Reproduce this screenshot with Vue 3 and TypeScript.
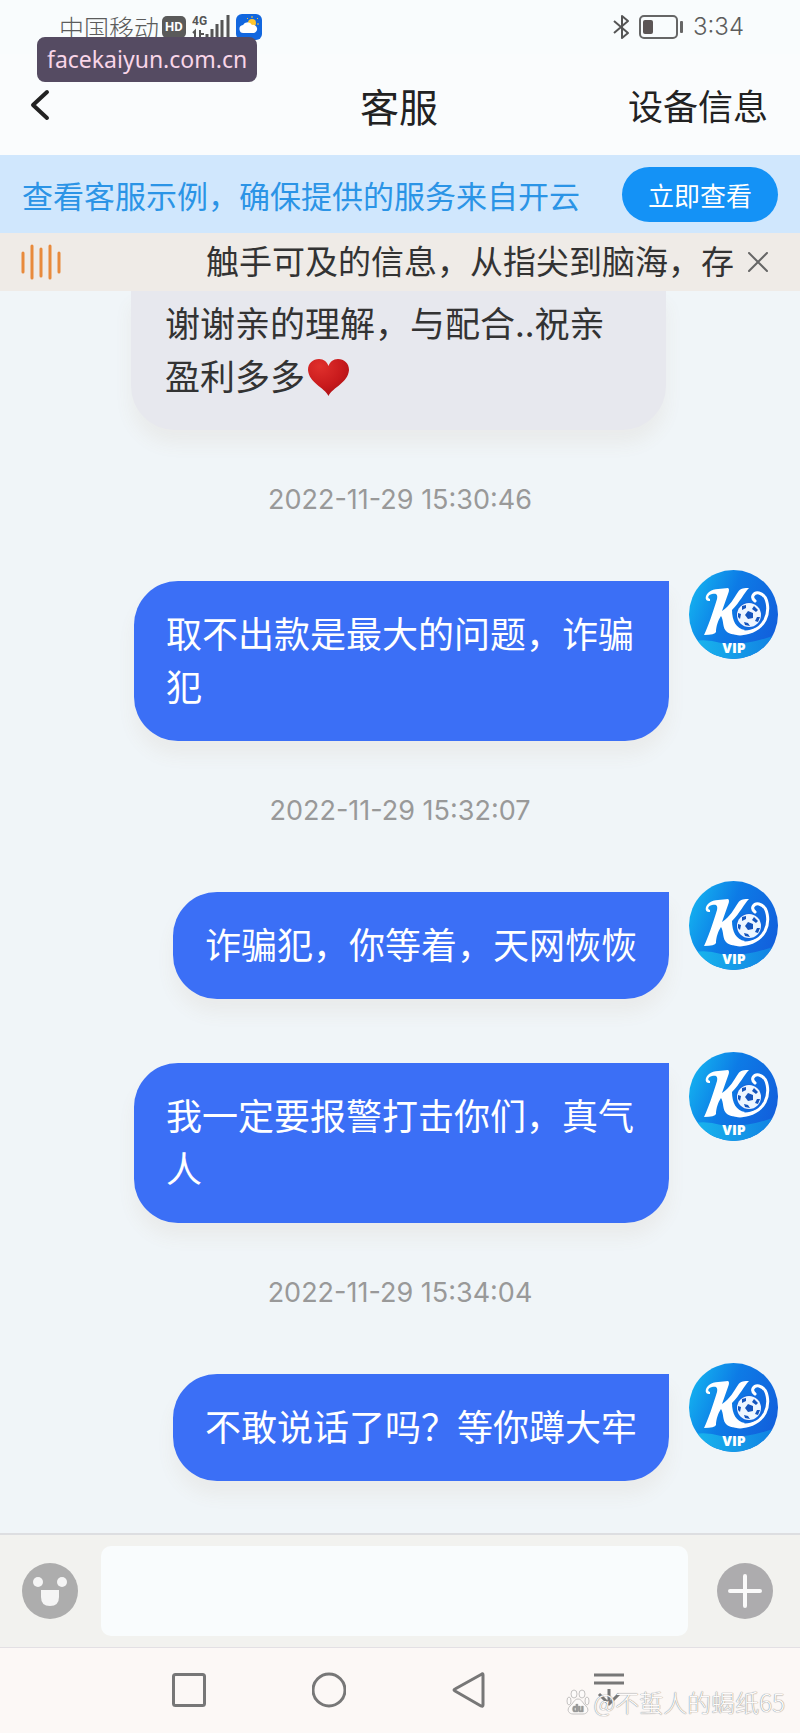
<script setup lang="ts">
import { ref } from 'vue'

interface Entry {
  id: number
  kind: 'in' | 'out' | 'time'
  text: string
  heart?: boolean
}

const entries: Entry[] = [
  { id: 1, kind: 'in', text: '谢谢亲的理解，与配合..祝亲盈利多多', heart: true },
  { id: 2, kind: 'time', text: '2022-11-29 15:30:46' },
  { id: 3, kind: 'out', text: '取不出款是最大的问题，诈骗犯' },
  { id: 4, kind: 'time', text: '2022-11-29 15:32:07' },
  { id: 5, kind: 'out', text: '诈骗犯，你等着，天网恢恢' },
  { id: 6, kind: 'out', text: '我一定要报警打击你们，真气人' },
  { id: 7, kind: 'time', text: '2022-11-29 15:34:04' },
  { id: 8, kind: 'out', text: '不敢说话了吗？等你蹲大牢' },
]

const draft = ref('')
</script>

<template>
  <div class="app">
    <div class="status">
      <div class="status-group">
        <span>中国移动</span>
        <span class="hd">HD</span>
        <svg class="signal" width="38" height="26" viewBox="0 0 38 26" aria-hidden="true">
          <text x="0" y="11" font-size="12" font-weight="700" fill="#555" font-family="Roboto, sans-serif">4G</text>
          <g stroke="#555" stroke-width="2" fill="none">
            <path d="M3 25V17L1 19M8 16V25M8 20H12" />
          </g>
          <g stroke="#555" stroke-width="3">
            <path d="M15 25V20M20 25V15M25 25V10M30 25V6M36 25V1" />
          </g>
        </svg>
        <svg width="26" height="26" viewBox="0 0 26 26" aria-hidden="true">
          <rect width="26" height="26" rx="6" fill="#1267df" />
          <circle cx="16" cy="9" r="4" fill="#ffc62e" />
          <path d="M16 2v2M22 4l-1 1M23 10h-2M11 4l1 1" stroke="#ffc62e" stroke-width="1" />
          <path d="M8 19a4 4 0 0 1-1-8 5 5 0 0 1 9 0 4 4 0 0 1 2 8z" fill="#fff" />
        </svg>
      </div>
      <div class="status-group">
        <svg width="18" height="26" viewBox="0 0 18 26" fill="none" stroke="#555" stroke-width="2" stroke-linejoin="round" aria-hidden="true">
          <path d="M1 7L15 19L9 24V2L15 7L1 19" />
        </svg>
        <svg class="battery" width="45" height="24" viewBox="0 0 45 24" aria-hidden="true">
          <rect x="1" y="1" width="37" height="22" rx="4" fill="none" stroke="#666" stroke-width="2" />
          <rect x="4" y="5" width="10" height="14" rx="2" fill="#5c5555" />
          <rect x="41" y="6" width="3" height="12" rx="1" fill="#666" />
        </svg>
        <span class="clock">3:34</span>
      </div>
    </div>
    <div class="site-tag">facekaiyun.com.cn</div>

    <header class="header">
      <button class="plain back" type="button" aria-label="返回">
        <svg width="20" height="32" viewBox="0 0 20 32" fill="none" stroke="#222" stroke-width="4" stroke-linecap="round" stroke-linejoin="round">
          <path d="M17 3L3 16L17 29" />
        </svg>
      </button>
      <h1>客服</h1>
      <button class="plain device" type="button">设备信息</button>
    </header>

    <section class="banner">
      <span>查看客服示例，确保提供的服务来自开云</span>
      <button class="plain view" type="button">立即查看</button>
    </section>

    <section class="notice">
      <svg width="40" height="36" viewBox="0 0 40 36" stroke="#e88a3c" stroke-width="3" stroke-linecap="round" aria-hidden="true">
        <path d="M2 9V28M11 2V34M20 5V32M29 2V34M38 9V28" />
      </svg>
      <span class="ticker">触手可及的信息，从指尖到脑海，存</span>
      <button class="plain close" type="button" aria-label="关闭">
        <svg width="20" height="20" viewBox="0 0 20 20" stroke="#666" stroke-width="2" stroke-linecap="round">
          <path d="M1 1L19 19M19 1L1 19" />
        </svg>
      </button>
    </section>

    <main class="chat">
      <template v-for="entry in entries" :key="entry.id">
        <time v-if="entry.kind === 'time'" class="time">{{ entry.text }}</time>
        <div v-else-if="entry.kind === 'in'" class="bubble incoming">
          {{ entry.text }}<svg v-if="entry.heart" class="heart" width="41" height="37" viewBox="0 0 41 37" role="img" aria-label="红心">
            <defs>
              <radialGradient id="heartFill" cx="0.3" cy="0.2" r="0.9">
                <stop offset="0" stop-color="#e0302c" />
                <stop offset="0.6" stop-color="#c81a1c" />
                <stop offset="1" stop-color="#a80f14" />
              </radialGradient>
            </defs>
            <path d="M20.500 37C16 28 1 24 0 11C0 4 5 0 11 0C16 0 19 3 20.500 7C22 3 25 0 30 0C36 0 41 4 41 11C40 24 25 28 20.500 37Z" fill="url(#heartFill)" />
          </svg>
        </div>
        <div v-else class="row">
          <p class="bubble outgoing">{{ entry.text }}</p>
          <svg class="avatar" width="89" height="89" viewBox="0 0 89 89" aria-hidden="true">
            <defs>
              <linearGradient :id="'bg' + entry.id" x1="0" y1="0.2" x2="1" y2="0.6">
                <stop offset="0" stop-color="#14b4f0" />
                <stop offset="0.45" stop-color="#0d7be6" />
                <stop offset="1" stop-color="#1260dc" />
              </linearGradient>
              <linearGradient :id="'wave' + entry.id" x1="0" y1="0" x2="1" y2="0">
                <stop offset="0" stop-color="#19b9ee" />
                <stop offset="1" stop-color="#117fe2" />
              </linearGradient>
              <clipPath :id="'clip' + entry.id"><circle cx="44.500" cy="44.500" r="44.500" /></clipPath>
            </defs>
            <g :clip-path="'url(#clip' + entry.id + ')'">
              <rect width="89" height="89" :fill="'url(#bg' + entry.id + ')'" />
              <path d="M0 72Q16 68 32 73Q56 77 89 64V89H0Z" :fill="'url(#wave' + entry.id + ')'" />
            </g>
            <path d="M21 31C16 32 15 26 20 22C25 18 33 19 39 18Q41 19 39 24L33 41C41 36 45 28 49 22C51 18 56 18 60 18C55 23 51 32 43 40C43 50 47 59 56 60C52 65 43 66 38 62C33 58 35 50 32 46C29 50 27 57 27 62Q26 65 15 65C19 57 24 42 28 29C29 24 27 23 23 24C19 25 18 28 21 29Z" fill="#fff" />
            <path d="M66 31C61 27 65 22 70 23C79 25 81 40 76 50C70 61 58 65 46 62" fill="none" stroke="#fff" stroke-width="3" stroke-linecap="round" />
            <path d="M43 52C47 63 60 62 68 57C61 65 50 68 43 63Z" fill="#fff" />
            <circle cx="60" cy="45" r="13" fill="#1567dc" />
            <circle cx="60" cy="45" r="12" fill="#eef6ff" />
            <g fill="#1555bd">
              <path d="M59 41l5 2 0 5-5 1-3-4z" />
              <path d="M53 36l4-1 0 3-4 2zM65 36l4 4-2 2-4-3zM68 47l3 0-2 5-3-1zM55 52l4 1 2 3-5-1zM49 43l3 1-1 5-2-2z" />
            </g>
            <text x="45" y="83" text-anchor="middle" font-size="14" font-weight="900" fill="#fff" font-family="'Open Sans', sans-serif">VIP</text>
          </svg>
        </div>
      </template>
    </main>

    <form class="composer" @submit.prevent>
      <button class="plain round" type="button" aria-label="表情">
        <svg width="56" height="56" viewBox="0 0 56 56">
          <circle cx="28" cy="28" r="28" fill="#adadad" />
          <circle cx="16" cy="19" r="5" fill="#f5f5f5" />
          <circle cx="40" cy="19" r="5" fill="#f5f5f5" />
          <path d="M19 27H37V34Q37 43 28 43Q19 43 19 34Z" fill="#f5f5f5" />
        </svg>
      </button>
      <input v-model="draft" class="field" type="text" aria-label="消息" />
      <button class="plain round" type="button" aria-label="更多">
        <svg width="56" height="56" viewBox="0 0 56 56">
          <circle cx="28" cy="28" r="28" fill="#adacae" />
          <path d="M28 13V43M13 28H43" stroke="#fafafa" stroke-width="4" stroke-linecap="round" />
        </svg>
      </button>
    </form>

    <nav class="system">
      <button class="plain" type="button" aria-label="最近任务">
        <svg width="34" height="36" viewBox="0 0 34 36"><rect x="1.500" y="2.500" width="31" height="31" rx="2" /></svg>
      </button>
      <button class="plain" type="button" aria-label="主页">
        <svg width="34" height="36" viewBox="0 0 34 36"><circle cx="17" cy="18" r="16" /></svg>
      </button>
      <button class="plain" type="button" aria-label="后退">
        <svg width="34" height="36" viewBox="0 0 34 36"><path d="M30 2Q31 1 31 3V33Q31 35 29 34L3 19Q1 18 3 17Z" /></svg>
      </button>
      <button class="plain" type="button" aria-label="收起">
        <svg width="34" height="36" viewBox="0 0 34 36"><path d="M2 3H32M2 11H32M17 17V32M7 22L17 32L27 22" /></svg>
      </button>
      <div class="watermark">
        <svg width="24" height="26" viewBox="0 0 24 26" aria-hidden="true">
          <g fill="#fdfbfa" stroke="#c4c2c1" stroke-width="1">
            <ellipse cx="8" cy="5" rx="3" ry="4" />
            <ellipse cx="16" cy="5" rx="3" ry="4" />
            <ellipse cx="3" cy="12" rx="2" ry="4" />
            <ellipse cx="21" cy="12" rx="2" ry="4" />
            <path d="M12 10C16 10 17 15 20 17C24 21 21 25 17 25H7C3 25 0 21 4 17C7 15 8 10 12 10Z" />
          </g>
          <text x="12" y="23" text-anchor="middle" font-size="10" font-weight="700" fill="#999" font-family="Roboto, sans-serif">du</text>
        </svg>
        <span>@不蜇人的蝎纸65</span>
      </div>
    </nav>
  </div>
</template>

<style>
body {
  margin: 0;
  background: #fcf8f6;
}
</style>

<style scoped>
.app {
  position: relative;
  display: flex;
  flex-direction: column;
  min-height: 100vh;
  background: #f0f5f8;
  color: #333;
  font-family: "Noto Sans CJK SC", sans-serif;
}
.plain {
  padding: 0;
  border: 0;
  background: none;
  color: inherit;
  font: inherit;
}
svg {
  display: block;
  flex: none;
}
.status {
  display: flex;
  justify-content: space-between;
  align-items: center;
  height: 54px;
  padding: 0 56px 0 59px;
  background: #f9fcfd;
  color: #5c5c5c;
  font-size: 25px;
  font-weight: 300;
}
.status-group {
  display: flex;
  align-items: center;
}
.hd {
  margin: 0 6px 0 3px;
  padding: 0 3px;
  border-radius: 5px;
  background: #5a5a5a;
  color: #fff;
  font: 700 13px/22px Roboto, sans-serif;
}
.signal {
  margin-right: 6px;
}
.battery {
  margin: 0 9px 0 8px;
}
.clock {
  font: 300 24px/32px Inter, sans-serif;
}
.site-tag {
  position: absolute;
  top: 37px;
  left: 37px;
  padding: 0 10px;
  border-radius: 8px;
  background: #554b62;
  color: #f9d5e8;
  font: 23px/45px "Noto Sans", sans-serif;
}
.header {
  display: grid;
  grid-template-columns: 1fr auto 1fr;
  align-items: center;
  height: 101px;
  padding: 0 32px 0 30px;
  background: #fafcfd;
  color: #222;
}
.back {
  justify-self: start;
}
h1 {
  margin: 0;
  font-size: 39px;
  font-weight: 400;
}
.device {
  justify-self: end;
  font-size: 35px;
}
.banner {
  display: flex;
  align-items: center;
  justify-content: space-between;
  height: 78px;
  padding: 0 22px;
  background: #d0e7fd;
  color: #2b94e6;
  font-size: 31px;
}
.view {
  padding: 0 26px;
  border-radius: 28px;
  background: #1492f6;
  color: #fff;
  font-size: 26px;
  line-height: 55px;
}
.notice {
  display: flex;
  align-items: center;
  height: 58px;
  padding: 0 32px 0 21px;
  background: #efebe7;
  font-size: 33px;
}
.ticker {
  flex: 1;
  padding: 0 14px 4px 0;
  line-height: 48px;
  text-align: right;
  white-space: nowrap;
}
.chat {
  display: flex;
  flex-direction: column;
  flex: 1;
  padding: 0 22px 52px;
}
.bubble {
  box-sizing: border-box;
  max-width: 535px;
  margin: 0;
  padding: 25px 32px 29px;
  line-height: 53px;
  box-shadow: 0 14px 18px rgba(150, 110, 70, 0.07);
}
.incoming {
  width: 535px;
  margin-left: 109px;
  padding: 4px 34px 29px;
  border-radius: 0 0 44px 44px;
  background: #e7e8ee;
  font-size: 35px;
}
.heart {
  display: inline-block;
  margin-left: 3px;
  vertical-align: -6px;
}
.time {
  color: #999;
  font: 27px/140px Inter, sans-serif;
  text-align: center;
}
.row {
  display: flex;
  justify-content: flex-end;
  align-items: flex-start;
  gap: 20px;
}
.row + .row {
  margin-top: 53px;
}
.outgoing {
  margin-top: 11px;
  border-radius: 44px 0 44px 44px;
  background: #3b6ff6;
  color: #fff;
  font-size: 36px;
}
.composer {
  display: flex;
  align-items: center;
  gap: 23px;
  height: 112px;
  padding: 0 27px 0 22px;
  border-top: 2px solid #dddee1;
  border-bottom: 1px solid #e3e0e4;
  background: #f2f2ef;
}
.field {
  flex: 1;
  min-width: 0;
  height: 90px;
  box-sizing: border-box;
  margin-right: 6px;
  padding: 0 20px;
  border: 0;
  border-radius: 10px;
  background: #f9fcfd;
  font: 35px "Noto Sans CJK SC", sans-serif;
}
.system {
  position: relative;
  display: flex;
  justify-content: center;
  align-items: flex-start;
  gap: 106px;
  height: 62px;
  padding: 24px 2px 0 0;
  background: #fcf8f6;
}
.system button svg {
  fill: none;
  stroke: #777;
  stroke-width: 3;
  stroke-linejoin: round;
}
.watermark {
  position: absolute;
  right: 15px;
  bottom: 14px;
  display: flex;
  align-items: center;
  gap: 3px;
  color: #fdfbfa;
  font-size: 24px;
  font-weight: 300;
  line-height: 36px;
  text-shadow: 0 0 1px #888, 0 0 1px #999;
}
</style>
